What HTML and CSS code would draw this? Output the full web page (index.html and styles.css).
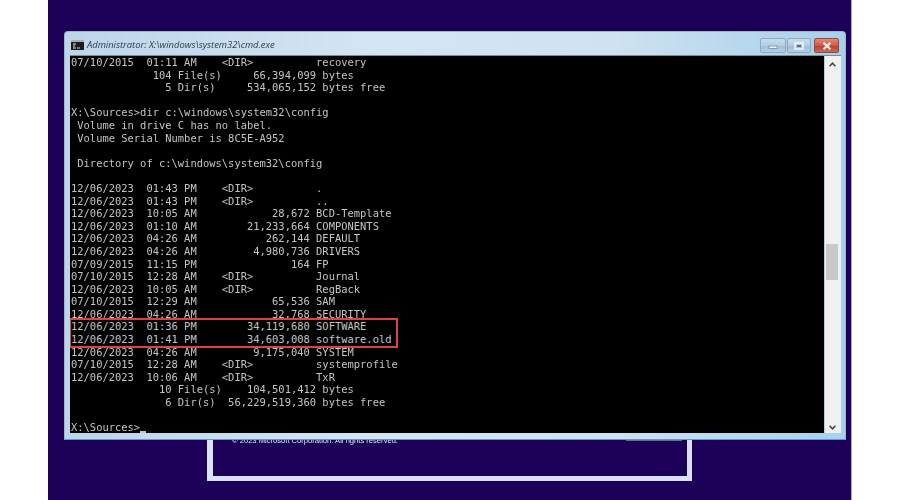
FILE: index.html
```
<!DOCTYPE html>
<html lang="en">
<head>
<meta charset="utf-8">
<title>Administrator: X:\windows\system32\cmd.exe</title>
<link rel="stylesheet" href="styles.css">
</head>
<body>
<main class="desktop">
  <section class="setup">
    <div class="setup-foot">
      <span class="copyright">© 2023 Microsoft Corporation. All rights reserved.</span>
      <span class="setup-button"></span>
    </div>
  </section>
  <section class="window">
    <header class="titlebar">
      <svg class="app-icon" width="13" height="10" viewBox="0 0 13 10">
        <rect width="13" height="10" fill="#1c1c1c"/>
        <rect x="0" y="0" width="13" height="2" fill="#a6b0bc"/>
        <path d="M2 4h3M2 6h2M2 8h3" stroke="#e4e4e4" stroke-width="1"/>
        <path d="M6 8h3" stroke="#d0d0d0" stroke-width="1"/>
      </svg>
      <span class="title">Administrator: X:\windows\system32\cmd.exe</span>
      <div class="controls">
        <span class="control"><svg width="10" height="6" viewBox="0 0 10 6"><rect x="1" y="3" width="8" height="2.5" fill="#eef4fa" stroke="#54708c" stroke-width=".6"/></svg></span>
        <span class="control maximize"><svg width="10" height="8" viewBox="0 0 10 8"><rect x="1" y="1" width="8" height="6" fill="none" stroke="#eef4fa" stroke-width="1.6"/><rect x="3" y="3" width="4" height="2" fill="#54708c"/></svg></span>
        <span class="control close"><svg width="12" height="8" viewBox="0 0 12 8"><path d="M2.5 .8 9.5 7.2M9.5 .8 2.5 7.2" stroke="#f4eeee" stroke-width="2.2"/></svg></span>
      </div>
    </header>
    <div class="body">
      <div class="console">
<pre class="lines">07/10/2015  01:11 AM    &lt;DIR&gt;          recovery
             104 File(s)     66,394,099 bytes
               5 Dir(s)     534,065,152 bytes free

X:\Sources&gt;dir c:\windows\system32\config
 Volume in drive C has no label.
 Volume Serial Number is 8C5E-A952

 Directory of c:\windows\system32\config

12/06/2023  01:43 PM    &lt;DIR&gt;          .
12/06/2023  01:43 PM    &lt;DIR&gt;          ..
12/06/2023  10:05 AM            28,672 BCD-Template
12/06/2023  01:10 AM        21,233,664 COMPONENTS
12/06/2023  04:26 AM           262,144 DEFAULT
12/06/2023  04:26 AM         4,980,736 DRIVERS
07/09/2015  11:15 PM               164 FP
07/10/2015  12:28 AM    &lt;DIR&gt;          Journal
12/06/2023  10:05 AM    &lt;DIR&gt;          RegBack
07/10/2015  12:29 AM            65,536 SAM
12/06/2023  04:26 AM            32,768 SECURITY</pre>
<pre class="lines highlight">12/06/2023  01:36 PM        34,119,680 SOFTWARE
12/06/2023  01:41 PM        34,603,008 software.old</pre>
<pre class="lines">12/06/2023  04:26 AM         9,175,040 SYSTEM
07/10/2015  12:28 AM    &lt;DIR&gt;          systemprofile
12/06/2023  10:06 AM    &lt;DIR&gt;          TxR
              10 File(s)    104,501,412 bytes
               6 Dir(s)  56,229,519,360 bytes free

X:\Sources&gt;<span class="cursor"></span></pre>
      </div>
      <aside class="scrollbar">
        <svg class="arrow" width="7" height="5" viewBox="0 0 7 5"><path d="M.6 4.2 3.5 1.2 6.4 4.2" fill="none" stroke="#444" stroke-width="1.5"/></svg>
        <div class="track"><div class="thumb"></div></div>
        <svg class="arrow" width="7" height="5" viewBox="0 0 7 5"><path d="M.6 .8 3.5 3.8 6.4 .8" fill="none" stroke="#444" stroke-width="1.5"/></svg>
      </aside>
    </div>
  </section>
</main>
</body>
</html>
```
FILE: styles.css
```
* { box-sizing: border-box; }
html, body { margin: 0; height: 100%; background: #fff; overflow: hidden; }
body { padding: 0 48px; }

.desktop {
  position: relative;
  width: 804px;
  height: 500px;
  background: #1d0058;
  border-right: 1px solid #b9a6e0;
  overflow: hidden;
}

.setup {
  position: absolute;
  left: 159px;
  top: 300px;
  width: 485px;
  height: 181px;
  border: 6px solid #d9e2f2;
  border-width: 0 5px 5px 6px;
  display: flex;
  align-items: flex-end;
  padding: 0 5px 30px 19px;
  filter: blur(.35px);
}
.setup-foot { flex: 1; display: flex; justify-content: space-between; align-items: flex-end; }
.copyright { font: 7.6px/10px "Liberation Sans", Arial, sans-serif; color: #e6e6f0; }
.setup-button { width: 56px; height: 2px; margin-bottom: 5px; background: #6d6d80; }

.window {
  position: absolute;
  left: 16px;
  top: 31px;
  width: 782px;
  height: 409px;
  display: flex;
  flex-direction: column;
  padding: 0 4px 6px 5px;
  border-radius: 4px 4px 0 0;
  background: linear-gradient(90deg, #bcd6e8 0, #d4e5f2 40%, #cfe2f0 70%, #a6d0ea 100%);
  border: 1px solid #9fb4c6;
  border-bottom-color: #5d9cc0;
  filter: blur(.35px);
}

.titlebar { height: 23px; display: flex; align-items: center; flex: none; }
.app-icon { margin: 2px 3px 0 1px; }
.title {
  font: italic 9.4px "Open Sans", "Liberation Sans", sans-serif;
  color: #2c3c50;
  margin-top: 2px;
}
.controls { margin-left: auto; display: flex; gap: 1px; align-self: flex-start; margin-top: 6px; margin-right: 2px; }
.control {
  width: 26px;
  height: 15px;
  display: flex;
  align-items: center;
  justify-content: center;
  border: 1px solid #8fa8c0;
  border-radius: 2px;
  background: linear-gradient(#c8dcee 0, #b4cde2 50%, #9ebcd6 51%, #b4d0e6 100%);
}
.maximize { width: 24px; }
.close {
  width: 25px;
  margin-left: 2px;
  border-color: #8a4a48;
  background: linear-gradient(#de8a76 0, #cf5a48 50%, #b93a2c 51%, #d06a58 100%);
}

.body { flex: 1; display: flex; min-height: 0; border-top: 1px solid #7e8c9a; }

.console {
  width: 755px;
  background: #000;
  padding: 0 0 0 1px;
  overflow: hidden;
}
.lines {
  margin: 0;
  font: 10.44px/12.586px "DejaVu Sans Mono", "Liberation Mono", monospace;
  color: #c4c4c4;
}
.highlight {
  position: relative;
  margin: -2.5px 0 -2px -1px;
  width: 328px;
  padding: 0;
  padding-top: .5px;
  border: 2px solid #e0403f;
  border-left-width: 1px;
  background: #000;
}
.cursor { display: inline-block; width: 6px; height: 2px; background: #c4c4c4; vertical-align: -2px; }

.scrollbar {
  width: 16px;
  margin-left: 1px;
  background: #f0f0f0;
  display: flex;
  flex-direction: column;
  align-items: center;
  padding: 6px 0 3px;
}
.arrow { margin-right: 1px; }
.track { flex: 1; width: 100%; position: relative; }
.thumb {
  position: absolute;
  left: 1px;
  right: 3px;
  top: 177px;
  height: 36px;
  background: #c8c8c8;
}
```
